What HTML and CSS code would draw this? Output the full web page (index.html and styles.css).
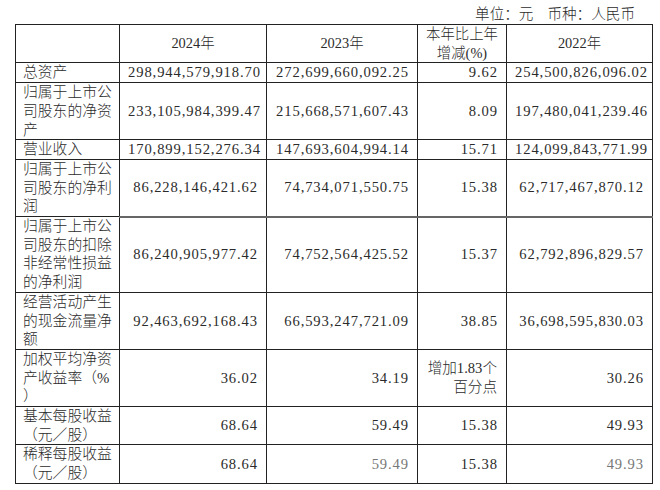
FILE: index.html
```html
<!DOCTYPE html>
<html lang="zh-CN">
<head>
<meta charset="utf-8">
<title>主要会计数据</title>
<link rel="stylesheet" href="styles.css">
</head>
<body>
<div class="unit">单位：元<span class="gap"></span>币种：人民币</div>
<table class="data">
  <colgroup>
    <col class="c1"><col class="c2"><col class="c3"><col class="c4"><col class="c5">
  </colgroup>
  <thead>
    <tr>
      <th></th>
      <th>2024年</th>
      <th>2023年</th>
      <th>本年比上年<br>增减(%)</th>
      <th>2022年</th>
    </tr>
  </thead>
  <tbody>
    <tr>
      <td class="label">总资产</td>
      <td class="num">298,944,579,918.70</td>
      <td class="num">272,699,660,092.25</td>
      <td class="num">9.62</td>
      <td class="num">254,500,826,096.02</td>
    </tr>
    <tr>
      <td class="label">归属于上市公<br>司股东的净资<br>产</td>
      <td class="num">233,105,984,399.47</td>
      <td class="num">215,668,571,607.43</td>
      <td class="num">8.09</td>
      <td class="num">197,480,041,239.46</td>
    </tr>
    <tr>
      <td class="label">营业收入</td>
      <td class="num">170,899,152,276.34</td>
      <td class="num">147,693,604,994.14</td>
      <td class="num">15.71</td>
      <td class="num">124,099,843,771.99</td>
    </tr>
    <tr>
      <td class="label">归属于上市公<br>司股东的净利<br>润</td>
      <td class="num">86,228,146,421.62</td>
      <td class="num">74,734,071,550.75</td>
      <td class="num">15.38</td>
      <td class="num">62,717,467,870.12</td>
    </tr>
    <tr class="thick">
      <td class="label">归属于上市公<br>司股东的扣除<br>非经常性损益<br>的净利润</td>
      <td class="num">86,240,905,977.42</td>
      <td class="num">74,752,564,425.52</td>
      <td class="num">15.37</td>
      <td class="num">62,792,896,829.57</td>
    </tr>
    <tr>
      <td class="label">经营活动产生<br>的现金流量净<br>额</td>
      <td class="num">92,463,692,168.43</td>
      <td class="num">66,593,247,721.09</td>
      <td class="num">38.85</td>
      <td class="num">36,698,595,830.03</td>
    </tr>
    <tr>
      <td class="label">加权平均净资<br>产收益率（%<br>）</td>
      <td class="num">36.02</td>
      <td class="num">34.19</td>
      <td class="num tight">增加1.83个<br>百分点</td>
      <td class="num">30.26</td>
    </tr>
    <tr>
      <td class="label">基本每股收益<br>（元／股）</td>
      <td class="num">68.64</td>
      <td class="num">59.49</td>
      <td class="num">15.38</td>
      <td class="num">49.93</td>
    </tr>
    <tr>
      <td class="label">稀释每股收益<br>（元／股）</td>
      <td class="num">68.64</td>
      <td class="num faded">59.49</td>
      <td class="num">15.38</td>
      <td class="num faded">49.93</td>
    </tr>
  </tbody>
</table>
</body>
</html>
```

FILE: styles.css
```css
html, body {
  margin: 0;
  padding: 0;
  background: #ffffff;
}

body {
  width: 660px;
  height: 490px;
  overflow: hidden;
  font-family: "Liberation Serif", "Noto Sans CJK SC", serif;
  font-size: 14.4px;
  font-weight: 300;
  color: #2b2b2b;
}

.unit {
  height: 24px;
  box-sizing: border-box;
  padding: 5px 25px 0 0;
  line-height: 19px;
  text-align: right;
  font-size: 14.6px;
}

.unit .gap {
  display: inline-block;
  width: 14px;
}

.data {
  margin-left: 15px;
  width: 637px;
  border-collapse: collapse;
  table-layout: fixed;
}

.c1 { width: 104px; }
.c2 { width: 147px; }
.c3 { width: 151px; }
.c4 { width: 89px; }
.c5 { width: 146px; }

.data th,
.data td {
  border: 1px solid #222;
  padding: 0 8px;
  line-height: 18.7px;
  vertical-align: middle;
  white-space: nowrap;
}

.data th {
  font-weight: 300;
  text-align: center;
  padding: 0 2px;
}

.data td.label {
  text-align: left;
  padding: 0 4px 0 7px;
  font-size: 14.8px;
}

.data td.num {
  text-align: right;
  padding-right: 8px;
  font-size: 14.6px;
  letter-spacing: 0.9px;
}

.data td.tight {
  padding-left: 2px;
  letter-spacing: 0;
  padding-right: 9px;
}

.data td.faded {
  color: #777;
}

.data tr.thick td {
  border-top: 2px solid #666;
}

.data tr.thick td.label {
  border-top: 1px solid #222;
}
```
